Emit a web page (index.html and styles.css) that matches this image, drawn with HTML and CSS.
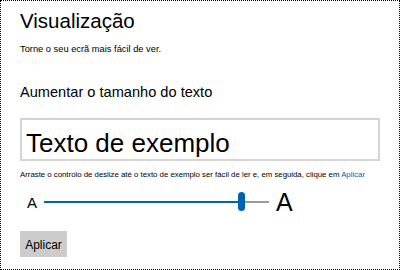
FILE: index.html
```html
<!DOCTYPE html>
<html>
<head>
	<title>Visualização</title>
	<meta charset="utf-8">
	<link rel="stylesheet" href="styles.css">
</head>
<body>
	<div class="frame">
		<h1>Visualização</h1>
		<p class="lead">Torne o seu ecrã mais fácil de ver.</p>
		<h2>Aumentar o tamanho do texto</h2>
		<div class="sample">Texto de exemplo</div>
		<p class="hint">Arraste o controlo de deslize até o texto de exemplo ser fácil de ler e, em seguida, clique em <span>Aplicar</span></p>
		<div class="slider_row">
			<span class="small_a">A</span>
			<div class="track">
				<div class="fill"></div>
				<div class="thumb"></div>
			</div>
			<span class="big_a">A</span>
		</div>
		<button class="apply">Aplicar</button>
	</div>
</body>
</html>
```

FILE: styles.css
```css
* {
	box-sizing: border-box;
}

body {
	margin: 0px;
	font-family: "Liberation Sans", Arial, sans-serif;
	color: #000;
	background: #fff;
}

.frame {
	width: 400px;
	height: 270px;
	border: 1px dotted #000;
	padding: 0px 19px;
	overflow: hidden;
}

h1 {
	font-size: 20.5px;
	font-weight: normal;
	margin: 0px;
	padding-top: 8px;
	line-height: 24px;
}

.lead {
	font-size: 9.3px;
	margin: 10px 0px 0px 0px;
	line-height: 13px;
}

h2 {
	font-size: 14.6px;
	font-weight: normal;
	margin: 27px 0px 0px 0px;
	line-height: 18px;
}

.sample {
	margin-top: 17px;
	height: 43px;
	border: 2px solid #d4d4d4;
	font-size: 26px;
	line-height: 32px;
	padding: 7px 0px 0px 4px;
}

.hint {
	font-size: 7.8px;
	margin: 8px 0px 0px 0px;
	line-height: 12px;
	white-space: nowrap;
}

.hint span {
	color: #0063b1;
}

.slider_row {
	display: flex;
	align-items: center;
	height: 22px;
	margin-top: 10px;
	padding-left: 7px;
}

.small_a {
	font-size: 15px;
	width: 17px;
}

.track {
	position: relative;
	width: 225px;
	height: 2px;
	background: #999;
}

.fill {
	width: 197px;
	height: 2px;
	background: #0063b1;
}

.thumb {
	position: absolute;
	left: 194px;
	top: -9px;
	width: 7px;
	height: 19px;
	border-radius: 4px;
	background: #0063b1;
}

.big_a {
	font-size: 25px;
	margin-left: 7px;
}

.apply {
	display: block;
	margin-top: 18px;
	border: 0px;
	background: #cccccc;
	font-family: "Liberation Sans", Arial, sans-serif;
	font-size: 12px;
	width: 47px;
	height: 26px;
	padding: 2px 0px 0px 0px;
	color: #000;
}
```
